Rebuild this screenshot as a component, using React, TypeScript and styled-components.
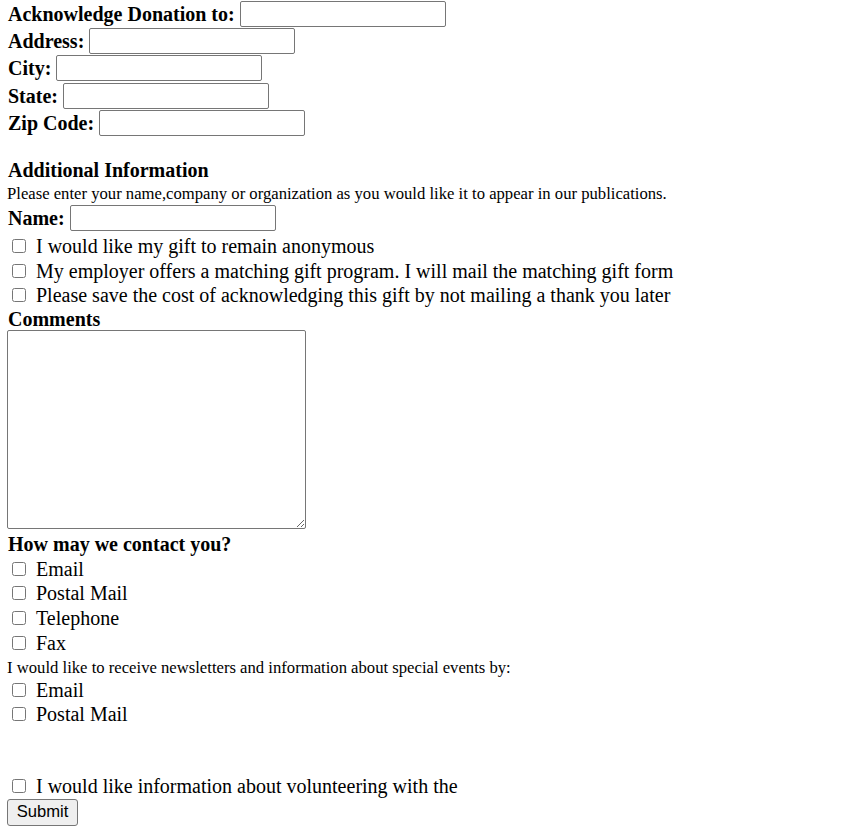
import React from "react";
import styled, { createGlobalStyle } from "styled-components";

const Global = createGlobalStyle`
  html, body { margin: 0; padding: 0; background: #fff; }
  body { font-family: "Liberation Serif", "Times New Roman", serif; color: #000; }
`;

const Form = styled.form`
  padding: 0 7px;
  display: flex;
  flex-direction: column;
  align-items: flex-start;
`;

const FieldRow = styled.div<{ $top?: number }>`
  display: flex;
  align-items: center;
  gap: 5px;
  height: 27.33px;
  margin-top: ${(p) => p.$top ?? 0}px;
`;

const Label = styled.label`
  font-weight: bold;
  font-size: 20px;
  line-height: 22px;
  padding-left: 1px;
`;

const TextInput = styled.input`
  box-sizing: border-box;
  width: 206px;
  height: 26px;
  margin: 0;
  border: 1px solid #767676;
  border-radius: 2px;
  background: #fff;
  padding: 1px 2px;
  font-size: 13.33px;
`;

const Heading = styled.div<{ $top?: number }>`
  font-weight: bold;
  font-size: 20px;
  line-height: 22px;
  height: 22px;
  padding-left: 1px;
  margin-top: ${(p) => p.$top ?? 0}px;
`;

const Note = styled.div<{ $top?: number }>`
  font-size: 16.67px;
  line-height: 19px;
  height: 19px;
  margin-top: ${(p) => p.$top ?? 0}px;
`;

const CheckRow = styled.label<{ $top?: number }>`
  display: flex;
  align-items: center;
  height: 24.55px;
  font-size: 20px;
  line-height: 22px;
  margin-top: ${(p) => p.$top ?? 0}px;
`;

const Box = styled.input.attrs({ type: "checkbox" })`
  width: 14px;
  height: 14px;
  margin: 0 10px 0 5px;
`;

const Comments = styled.textarea`
  box-sizing: border-box;
  width: 299px;
  height: 199px;
  margin: 0;
  border: 1px solid #767676;
  border-radius: 2px;
  font-size: 13.33px;
`;

const SubmitButton = styled.button`
  box-sizing: border-box;
  height: 27px;
  width: 71px;
  margin: 1px 0 0 0;
  padding: 0;
  font-family: "Liberation Sans", Arial, sans-serif;
  font-size: 16.6px;
  color: #000;
  background: #efefef;
  border: 1px solid #767676;
  border-radius: 3px;
`;

const fields = ["Acknowledge Donation to:", "Address:", "City:", "State:", "Zip Code:"];
const gifts = [
  "I would like my gift to remain anonymous",
  "My employer offers a matching gift program. I will mail the matching gift form",
  "Please save the cost of acknowledging this gift by not mailing a thank you later",
];
const contact = ["Email", "Postal Mail", "Telephone", "Fax"];
const news = ["Email", "Postal Mail"];

export default function App() {
  return (
    <>
      <Global />
      <Form onSubmit={(e) => e.preventDefault()}>
        {fields.map((f) => (
          <FieldRow key={f}>
            <Label>{f}</Label>
            <TextInput type="text" />
          </FieldRow>
        ))}
        <Heading $top={22}>Additional Information</Heading>
        <Note $top={3}>Please enter your name,company or organization as you would like it to appear in our publications.</Note>
        <FieldRow $top={2}>
          <Label>Name:</Label>
          <TextInput type="text" />
        </FieldRow>
        {gifts.map((g, i) => (
          <CheckRow key={g} $top={i === 0 ? 2 : 0}>
            <Box />
            {g}
          </CheckRow>
        ))}
        <Heading>Comments</Heading>
        <Comments />
        <Heading $top={4}>How may we contact you?</Heading>
        {contact.map((c, i) => (
          <CheckRow key={c} $top={i === 0 ? 2 : 0}>
            <Box />
            {c}
          </CheckRow>
        ))}
        <Note $top={3.5}>I would like to receive newsletters and information about special events by:</Note>
        {news.map((n) => (
          <CheckRow key={n}>
            <Box />
            {n}
          </CheckRow>
        ))}
        <CheckRow $top={47}>
          <Box />
          I would like information about volunteering with the
        </CheckRow>
        <SubmitButton type="submit">Submit</SubmitButton>
      </Form>
    </>
  );
}
